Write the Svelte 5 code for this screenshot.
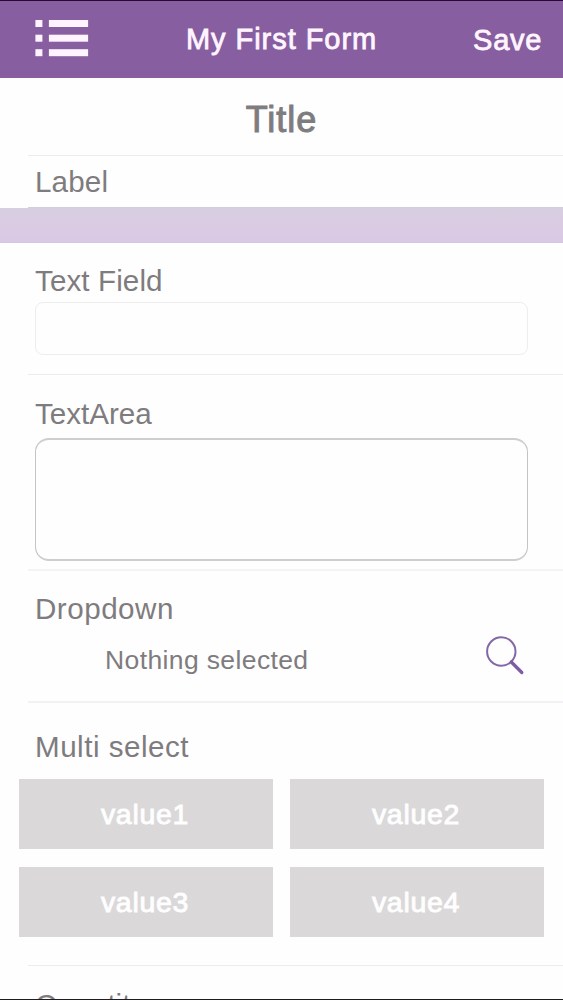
<script>
  const options = ['value1', 'value2', 'value3', 'value4'];
</script>

<div class="screen">
  <header>
    <svg class="menu" width="54" height="40" viewBox="0 0 54 40" aria-hidden="true">
      {#each [1, 15.7, 30.2] as y}
        <rect x="0.4" {y} width="7" height="7" />
        <rect x="13.9" {y} width="39.2" height="7" />
      {/each}
    </svg>
    <h1><span>My First Form</span></h1>
    <button class="save">Save</button>
  </header>

  <section class="title"><h2>Title</h2></section>
  <section class="label"><span class="name">Label</span></section>
  <div class="band"></div>
  <section class="field">
    <span class="name">Text Field</span>
    <div class="input"></div>
  </section>
  <section class="area">
    <span class="name">TextArea</span>
    <div class="textarea"></div>
  </section>
  <section class="dropdown">
    <span class="name wide">Dropdown</span>
    <div class="picker">
      <span class="picked">Nothing selected</span>
      <svg width="42" height="42" viewBox="0 0 42 42" fill="none" aria-hidden="true">
        <circle cx="18.3" cy="17.5" r="14.2" stroke="#8467a6" stroke-width="2" />
        <path d="M28.3 28L38.8 38.5" stroke="#7d5ca4" stroke-width="3.3" stroke-linecap="round" />
      </svg>
    </div>
  </section>
  <section class="multi">
    <span class="name wide">Multi select</span>
    <div class="grid">
      {#each options as option}
        <button>{option}</button>
      {/each}
    </div>
  </section>
  <section class="quantity"><span class="name">Quantity</span></section>
</div>

<style>
  :global(body) { background: #fff; }
  * { box-sizing: border-box; }
  .screen {
    width: 563px;
    height: 1000px;
    overflow: hidden;
    display: flex;
    flex-direction: column;
    background: #fefefe;
    border-bottom: 1px solid #201c22;
    font-family: "Liberation Sans", Arial, sans-serif;
    color: #7e7c7e;
  }
  header {
    flex: none;
    height: 78px;
    border-top: 1px solid #2a0836;
    background: #875fa0;
    color: #fff5ff;
    display: grid;
    grid-template-columns: 141px 1fr 141px;
    align-items: start;
    padding: 0 21px 0 35px;
  }
  .menu { margin-top: 18px; fill: #fff3ff; }
  h1, h2 { margin: 0; font-weight: 400; }
  h1 {
    margin-top: 21px;
    font-size: 29px;
    line-height: 34px;
    letter-spacing: 0.95px;
    white-space: nowrap;
    padding-left: 10px;
    -webkit-text-stroke: 0.8px currentColor;
  }
  button {
    border: 0;
    padding: 0;
    background: none;
    color: inherit;
    font: inherit;
  }
  .save {
    margin-top: 22px;
    font-size: 29px;
    line-height: 34px;
    letter-spacing: 0.7px;
    text-align: right;
    -webkit-text-stroke: 0.8px currentColor;
  }
  section {
    flex: none;
    margin-left: 28px;
    padding-left: 7px;
    border-bottom: 1px solid #eeebef;
    display: flex;
    flex-direction: column;
  }
  .title { height: 78px; padding: 21px 28px 0 0; }
  h2 {
    text-align: center;
    font-size: 36px;
    line-height: 42px;
    letter-spacing: 1px;
    -webkit-text-stroke: 1px currentColor;
  }
  .name { font-size: 29.6px; line-height: 34px; white-space: nowrap; }
  .wide { letter-spacing: 0.5px; }
  .label { height: 52px; padding-top: 9px; border-bottom-color: #d2cfdd; }
  .label .name { letter-spacing: 0.15px; }
  .band {
    flex: none;
    height: 35px;
    background: linear-gradient(#d7cee0, #dacbe3 50%, #dac9e4);
    border-bottom: 1px solid #d4c5e3;
  }
  .field { height: 132px; padding-top: 21px; }
  .field .name { letter-spacing: 0.1px; }
  .input {
    width: 493px;
    height: 53px;
    margin-top: 4px;
    border: 1px solid #ededed;
    border-radius: 8px;
  }
  .area { height: 196px; padding-top: 22px; border-bottom: 2px solid #f4f4f4; }
  .textarea {
    width: 493px;
    height: 123px;
    margin-top: 7px;
    border: 1px solid;
    border-width: 2px 1px;
    border-color: #cecece #c4c4c4;
    border-radius: 14px;
  }
  .dropdown { height: 132px; padding-top: 21px; border-bottom: 2px solid #f4f1f4; }
  .picker {
    display: flex;
    justify-content: space-between;
    padding: 8px 38px 0 70px;
  }
  .picked {
    padding-top: 11px;
    font-size: 26.5px;
    line-height: 30px;
    letter-spacing: 0.38px;
  }
  .multi { height: 263px; padding-top: 27px; }
  .grid {
    display: grid;
    grid-template-columns: 254px 254px;
    grid-auto-rows: 70px;
    gap: 18px 17px;
    margin: 15px 0 0 -16px;
  }
  .grid button {
    background: #dad8d9;
    color: #fefefe;
    font-size: 28.5px;
    line-height: 34px;
    letter-spacing: 0.7px;
    padding: 0 2px 0 0;
    -webkit-text-stroke: 0.9px currentColor;
  }
  .quantity { padding-top: 22px; height: 70px; border: 0; }
</style>
